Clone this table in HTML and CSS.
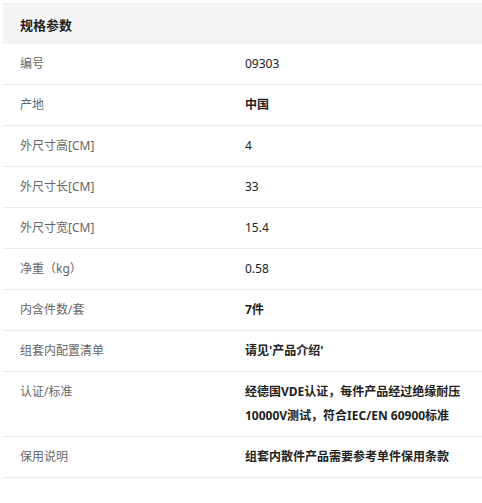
FILE: index.html
```html
<!DOCTYPE html>
<html lang="zh-CN">
<head>
<meta charset="utf-8">
<title>规格参数</title>
<link rel="stylesheet" href="styles.css">
</head>
<body>
<section class="spec">
  <h2 class="spec-title">规格参数</h2>
  <div class="spec-row"><div class="label">编号</div><div class="value num">09303</div></div>
  <div class="spec-row"><div class="label">产地</div><div class="value">中国</div></div>
  <div class="spec-row"><div class="label">外尺寸高[CM]</div><div class="value num">4</div></div>
  <div class="spec-row"><div class="label">外尺寸长[CM]</div><div class="value num">33</div></div>
  <div class="spec-row"><div class="label">外尺寸宽[CM]</div><div class="value num">15.4</div></div>
  <div class="spec-row"><div class="label">净重（kg）</div><div class="value num">0.58</div></div>
  <div class="spec-row"><div class="label">内含件数/套</div><div class="value">7件</div></div>
  <div class="spec-row"><div class="label">组套内配置清单</div><div class="value">请见'产品介绍'</div></div>
  <div class="spec-row"><div class="label">认证/标准</div><div class="value">经德国VDE认证，每件产品经过绝缘耐压10000V测试，符合IEC/EN 60900标准</div></div>
  <div class="spec-row"><div class="label">保用说明</div><div class="value">组套内散件产品需要参考单件保用条款</div></div>
</section>
</body>
</html>
```
FILE: styles.css
```css
html, body {
  margin: 0;
  padding: 0;
  background: #fff;
  overflow: hidden;
}

body {
  font-family: "Noto Sans", "Noto Sans CJK SC", sans-serif;
  font-stretch: extra-condensed;
  font-size: 12px;
  color: #222;
}

.spec {
  margin: 3px 0 0 3px;
  width: 479px;
}

.spec-title {
  margin: 0;
  height: 41px;
  box-sizing: border-box;
  border-top: 1px solid #eeeeee;
  background: #f5f5f5;
  padding-left: 17px;
  display: flex;
  align-items: center;
  font-size: 13px;
  font-weight: bold;
  color: #222;
  font-family: "Noto Sans CJK SC", sans-serif;
  font-stretch: normal;
}

.spec-row {
  display: grid;
  grid-template-columns: 225px 1fr;
  padding: 8px 12px 8px 17px;
  line-height: 24px;
  border-bottom: 1px solid #ebebeb;
}

.label {
  color: #666;
}

.value {
  font-weight: bold;
  color: #222;
}

.value.num {
  font-weight: normal;
}
```
